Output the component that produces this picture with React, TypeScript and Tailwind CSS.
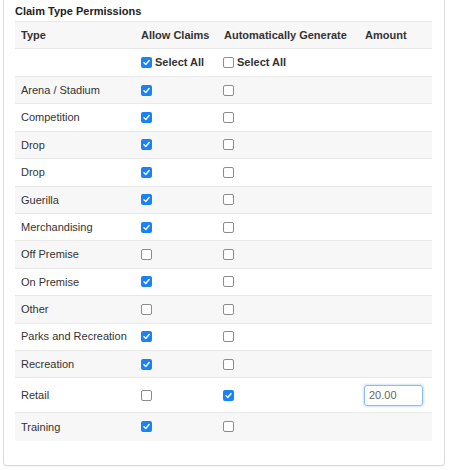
import React from 'react';

interface ClaimType {
  name: string;
  allow: boolean;
  auto: boolean;
  amount?: string;
}

const claimTypes: ClaimType[] = [
  { name: 'Arena / Stadium', allow: true, auto: false },
  { name: 'Competition', allow: true, auto: false },
  { name: 'Drop', allow: true, auto: false },
  { name: 'Drop', allow: true, auto: false },
  { name: 'Guerilla', allow: true, auto: false },
  { name: 'Merchandising', allow: true, auto: false },
  { name: 'Off Premise', allow: false, auto: false },
  { name: 'On Premise', allow: true, auto: false },
  { name: 'Other', allow: false, auto: false },
  { name: 'Parks and Recreation', allow: true, auto: false },
  { name: 'Recreation', allow: true, auto: false },
  { name: 'Retail', allow: false, auto: true, amount: '20.00' },
  { name: 'Training', allow: true, auto: false },
];

const Box: React.FC<{ checked: boolean }> = ({ checked }) =>
  checked ? (
    <span className="inline-flex w-[11px] h-[11px] rounded-[2px] bg-[#1a82f7] items-center justify-center shrink-0">
      <svg width="9" height="9" viewBox="0 0 10 10">
        <path d="M2.2 5.2 L4.2 7.2 L7.9 2.8" fill="none" stroke="white" strokeWidth="1.6" strokeLinecap="round" strokeLinejoin="round" />
      </svg>
    </span>
  ) : (
    <span className="inline-block w-[11px] h-[11px] rounded-[2px] border border-[#8d8d8d] bg-white shrink-0" />
  );

export default function App() {
  return (
    <div className="w-[450px] h-[470px] bg-white text-[11px] text-[#333] [font-family:'Liberation_Sans',Arial,sans-serif]">
      <div className="ml-[3px] w-[442px] h-[466px] border border-t-0 border-[#dcdcdc] rounded-b-[4px] pl-[11px] pr-[11px] shadow-[0_1px_1px_rgba(0,0,0,0.05)]">
        <div className="h-[21px] pt-[3px] font-bold text-[#222]">Claim Type Permissions</div>
        <div className="w-[417px] border-t border-[#e8e8e8]">
          <div className="flex h-[27px] items-center bg-[#f7f7f7] border-b border-[#e8e8e8] font-bold text-[#333]">
            <div className="w-[120px] pl-[6px]">Type</div>
            <div className="w-[83px] pl-[6px]">Allow Claims</div>
            <div className="w-[141px] pl-[6px]">Automatically Generate</div>
            <div className="w-[73px] pl-[6px]">Amount</div>
          </div>
          <div className="flex h-[28px] items-center bg-white border-b border-[#e8e8e8] font-bold text-[#333]">
            <div className="w-[120px]" />
            <div className="w-[83px] pl-[6px] flex items-center gap-[3px]">
              <Box checked />
              <span>Select All</span>
            </div>
            <div className="w-[141px] pl-[5px] flex items-center gap-[3px]">
              <Box checked={false} />
              <span>Select All</span>
            </div>
          </div>
          {claimTypes.map((t, i) => (
            <div
              key={i}
              className={`flex items-center border-b border-[#e8e8e8] last:border-b-0 ${
                t.amount ? 'h-[35px]' : 'h-[27.4px]'
              } ${i % 2 === 0 ? 'bg-[#f7f7f7]' : 'bg-white'}`}
            >
              <div className="w-[120px] pl-[6px]">{t.name}</div>
              <div className="w-[83px] pl-[6px] flex items-center">
                <Box checked={t.allow} />
              </div>
              <div className="w-[141px] pl-[5px] flex items-center">
                <Box checked={t.auto} />
              </div>
              <div className="w-[73px] pl-[5px] flex items-center">
                {t.amount && (
                  <input
                    readOnly
                    value={t.amount}
                    className="w-[59px] h-[21px] px-[4px] text-[11px] text-[#666] border border-[#8cbdf0] rounded-[3px] shadow-[0_0_2px_1px_rgba(110,170,240,0.35)] outline-none"
                  />
                )}
              </div>
            </div>
          ))}
        </div>
      </div>
    </div>
  );
}
